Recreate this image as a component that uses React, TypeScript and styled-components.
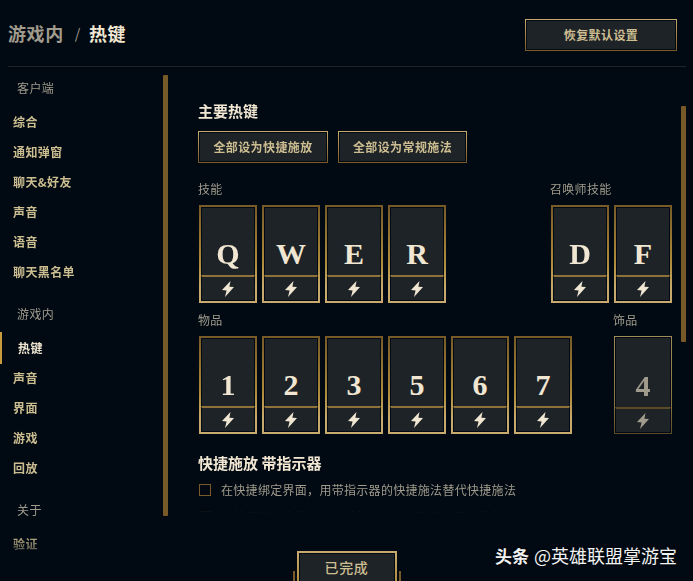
import React from 'react';
import styled, { createGlobalStyle } from 'styled-components';

const GlobalStyle = createGlobalStyle`
  html, body {
    margin: 0;
    padding: 0;
    background: #010a13;
  }
  * {
    box-sizing: border-box;
  }
`;

const cjk = `'Noto Sans CJK SC', 'Noto Sans', sans-serif`;

const Page = styled.div`
  position: relative;
  width: 693px;
  height: 581px;
  overflow: hidden;
  background: #010a13;
  font-family: ${cjk};
`;

const Header = styled.header`
  display: flex;
  align-items: center;
  justify-content: space-between;
  height: 67px;
  margin: 0 7px 0 8px;
  padding: 4px 9px 0 0;
  border-bottom: 1px solid #1e2328;
`;

const Title = styled.h1`
  display: flex;
  align-items: center;
  margin: 0 0 4px;
  font-size: 18px;
  font-weight: 700;
  line-height: 24px;
  letter-spacing: 0.6px;
  color: #a09b8c;
`;

const Slash = styled.span`
  margin: 0 8px 0 11px;
  font-size: 14px;
  font-weight: 400;
`;

const Current = styled.span`
  color: #f0e6d2;
`;

const GoldButton = styled.button<{ $width: number }>`
  width: ${p => p.$width}px;
  height: 32px;
  padding: 0 0 2px;
  border: 1px solid;
  border-image: linear-gradient(to bottom, #c8aa6e, #785a28) 1;
  background: #1e2328;
  box-shadow: inset 0 0 0 1px #010a13;
  font-family: ${cjk};
  font-size: 12px;
  font-weight: 700;
  letter-spacing: 0.4px;
  color: #cdbe91;
`;

const Body = styled.div`
  display: flex;
  height: 514px;
`;

const Sidebar = styled.nav`
  display: flex;
  flex: none;
  width: 198px;
  padding-top: 8px;
`;

const SideList = styled.div`
  width: 163px;
  height: 482px;
  overflow: hidden;
  mask-image: linear-gradient(to bottom, #000 460px, transparent 486px);
`;

const SideHeading = styled.div<{ $gap: number }>`
  margin: ${p => p.$gap}px 0 11px 17px;
  font-size: 12px;
  line-height: 16px;
  letter-spacing: 0.4px;
  color: #a09b8c;
`;

const SideItem = styled.div<{ $active?: boolean }>`
  position: relative;
  height: 30px;
  padding-left: ${p => (p.$active ? 18 : 13)}px;
  font-size: 12px;
  font-weight: 700;
  line-height: 30px;
  letter-spacing: 0.4px;
  color: ${p => (p.$active ? '#f0e6d2' : '#cdbe91')};

  &::before {
    content: '';
    display: ${p => (p.$active ? 'block' : 'none')};
    position: absolute;
    left: 0;
    top: -1px;
    width: 2px;
    height: 32px;
    background: #c89b3c;
  }
`;

const ScrollBar = styled.div<{ $top: number; $left: number; $height: number }>`
  flex: none;
  width: 5px;
  height: ${p => p.$height}px;
  margin-top: ${p => p.$top}px;
  margin-left: ${p => p.$left}px;
  border-radius: 1px;
  background: #785a28;
`;

const Main = styled.main`
  flex: none;
  width: 474px;
  height: 446px;
  padding-top: 34px;
  overflow: hidden;
  mask-image: linear-gradient(to bottom, #000 430px, transparent 446px);
`;

const SectionTitle = styled.h2<{ $gap: number }>`
  margin: ${p => p.$gap}px 0 0;
  font-size: 15px;
  font-weight: 700;
  line-height: 20px;
  color: #f0e6d2;
`;

const ButtonRow = styled.div`
  display: flex;
  gap: 10px;
  margin-top: 10px;
`;

const SlotsRow = styled.div<{ $gap: number }>`
  display: flex;
  justify-content: space-between;
  margin-top: ${p => p.$gap}px;
`;

const GroupLabel = styled.div`
  margin-bottom: 8px;
  font-size: 12px;
  line-height: 16px;
  letter-spacing: 0.3px;
  white-space: nowrap;
  color: #a09b8c;
`;

const Slots = styled.div`
  display: flex;
  gap: 5px;
  padding-left: 1px;
`;

const Slot = styled.div<{ $dim?: boolean }>`
  display: flex;
  flex-direction: column;
  width: 58px;
  height: 98px;
  padding: 1px;
  border: ${p => (p.$dim ? 1 : 2)}px solid;
  border-image: ${p =>
      p.$dim
        ? 'linear-gradient(to bottom, #a08c5a, #8a7440 70%, #5b4a28)'
        : 'linear-gradient(to bottom, #785a28, #b08d3c 60%, #c8aa6e 85%)'}
    1;
  background: #010a13;
  color: ${p => (p.$dim ? '#a09b8c' : '#f0e6d2')};
`;

const KeyFace = styled.div`
  display: flex;
  flex: 1;
  align-items: flex-end;
  justify-content: center;
  padding-bottom: 3px;
  background: #1e2328;
  font-family: 'Liberation Serif', serif;
  font-size: 30px;
  font-weight: 700;
  line-height: 36px;
`;

const ModeCell = styled.div<{ $dim?: boolean }>`
  display: flex;
  flex: none;
  align-items: center;
  justify-content: center;
  height: 26px;
  margin: 0 -1px -1px;
  border-top: 2px solid ${p => (p.$dim ? '#5b4a28' : '#8f713a')};
  border-left: 1px solid #010a13;
  border-right: 1px solid #010a13;
  border-bottom: 1px solid #010a13;
  background: #1e2328;
`;

const CheckRow = styled.label<{ $gap: number }>`
  display: flex;
  align-items: center;
  gap: 10px;
  margin: ${p => p.$gap}px 0 0 1px;
  font-size: 12px;
  line-height: 20px;
  letter-spacing: 0.3px;
  white-space: nowrap;
  color: #a09b8c;
`;

const CheckBox = styled.span`
  flex: none;
  width: 12px;
  height: 12px;
  border: 1px solid #785a28;
  background: #010a13;
`;

const FooterBar = styled.footer`
  display: flex;
  align-items: flex-start;
  justify-content: center;
  gap: 2px;
  position: absolute;
  left: 0;
  right: 0;
  bottom: 0;
  height: 30px;
`;

const Wing = styled.span`
  flex: none;
  width: 2px;
  height: 10px;
  margin-top: 20px;
  background: #785a28;
`;

const DoneButton = styled.button`
  width: 100px;
  height: 34px;
  padding: 0 0 2px;
  border: 2px solid;
  border-image: linear-gradient(to bottom, #c8aa6e, #b08d3c) 1;
  background: #1e2328;
  box-shadow: inset 0 0 0 1px #010a13;
  font-family: ${cjk};
  font-size: 14px;
  font-weight: 500;
  letter-spacing: 0.6px;
  color: #cdbe91;
`;

const Watermark = styled.div`
  position: absolute;
  right: 16px;
  bottom: 14px;
  font-size: 18px;
  line-height: 22px;
  white-space: nowrap;
  color: #f2f2f2;
  text-shadow: 0 0 2px rgba(0, 0, 0, 0.6);
`;

const WatermarkBrand = styled.span`
  margin-right: 5px;
  font-size: 17px;
  font-weight: 700;
`;

const Bolt: React.FC = () => (
  <svg width="12" height="16" viewBox="0 0 12 16" fill="currentColor">
    <path d="M8.5 0 L0 9 L4.6 9.6 L3 16 L12 6 L7.4 5.8 Z" />
  </svg>
);

const KeySlot: React.FC<{ label: string; dim?: boolean }> = ({ label, dim }) => (
  <Slot $dim={dim}>
    <KeyFace>{label}</KeyFace>
    <ModeCell $dim={dim}>
      <Bolt />
    </ModeCell>
  </Slot>
);

const clientItems = ['综合', '通知弹窗', '聊天&好友', '声音', '语音', '聊天黑名单'];
const gameItems = ['热键', '声音', '界面', '游戏', '回放'];

const App: React.FC = () => {
  return (
    <Page>
      <GlobalStyle />
      <Header>
        <Title>
          游戏内
          <Slash>/</Slash>
          <Current>热键</Current>
        </Title>
        <GoldButton $width={152}>恢复默认设置</GoldButton>
      </Header>
      <Body>
        <Sidebar>
          <SideList>
            <SideHeading $gap={5}>客户端</SideHeading>
            {clientItems.map(item => (
              <SideItem key={item}>{item}</SideItem>
            ))}
            <SideHeading $gap={19}>游戏内</SideHeading>
            {gameItems.map((item, i) => (
              <SideItem key={item} $active={i === 0}>
                {item}
              </SideItem>
            ))}
            <SideHeading $gap={19}>关于</SideHeading>
            <SideItem>验证</SideItem>
          </SideList>
          <ScrollBar $top={0} $left={0} $height={441} />
        </Sidebar>
        <Main>
          <SectionTitle $gap={0}>主要热键</SectionTitle>
          <ButtonRow>
            <GoldButton $width={130}>全部设为快捷施放</GoldButton>
            <GoldButton $width={129}>全部设为常规施法</GoldButton>
          </ButtonRow>
          <SlotsRow $gap={18}>
            <div>
              <GroupLabel>技能</GroupLabel>
              <Slots>
                {['Q', 'W', 'E', 'R'].map(k => (
                  <KeySlot key={k} label={k} />
                ))}
              </Slots>
            </div>
            <div>
              <GroupLabel>召唤师技能</GroupLabel>
              <Slots>
                {['D', 'F'].map(k => (
                  <KeySlot key={k} label={k} />
                ))}
              </Slots>
            </div>
          </SlotsRow>
          <SlotsRow $gap={9}>
            <div>
              <GroupLabel>物品</GroupLabel>
              <Slots>
                {['1', '2', '3', '5', '6', '7'].map(k => (
                  <KeySlot key={k} label={k} />
                ))}
              </Slots>
            </div>
            <div>
              <GroupLabel>饰品</GroupLabel>
              <Slots>
                <KeySlot label="4" dim />
              </Slots>
            </div>
          </SlotsRow>
          <SectionTitle $gap={19}>快捷施放 带指示器</SectionTitle>
          <CheckRow $gap={7}>
            <CheckBox />
            在快捷绑定界面，用带指示器的快捷施法替代快捷施法
          </CheckRow>
          <CheckRow $gap={7}>
            <CheckBox />
            在按下同一个技能时，就施放上一个已经按下的技能
          </CheckRow>
        </Main>
        <ScrollBar $top={39} $left={9} $height={236} />
      </Body>
      <FooterBar>
        <Wing />
        <DoneButton>已完成</DoneButton>
        <Wing />
      </FooterBar>
      <Watermark>
        <WatermarkBrand>头条</WatermarkBrand>@英雄联盟掌游宝
      </Watermark>
    </Page>
  );
};

export default App;
